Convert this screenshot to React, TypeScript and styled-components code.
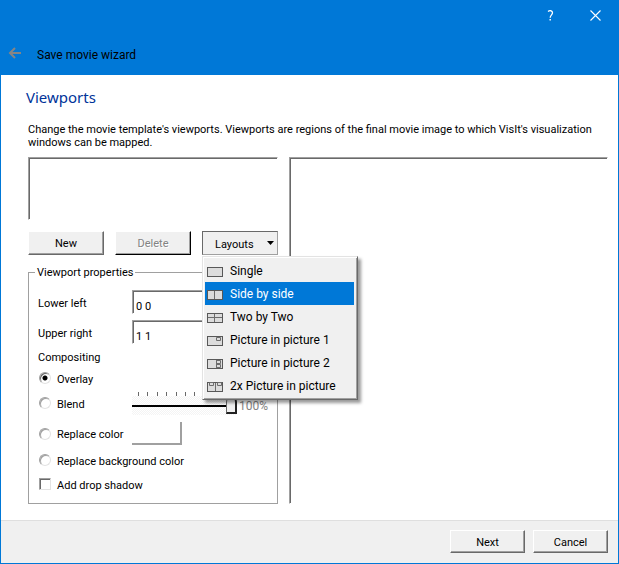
import React, { useState } from "react";
import styled, { createGlobalStyle, css } from "styled-components";

const blue = "#0078d7";
const face = "#f0f0f0";
const shade = "#a0a0a0";
const dark = "#696969";
const ui = `Roboto, "Liberation Sans", sans-serif`;

const GlobalStyle = createGlobalStyle`
  *, *::before, *::after { box-sizing: border-box; }
  body { margin: 0; background: #fff; color: #000; font: 11px/13px ${ui}; }
  button, input { font: inherit; color: inherit; margin: 0; }
`;

const Window = styled.div`
  display: flex;
  flex-direction: column;
  min-height: 100vh;
  border: 1px solid ${blue};
`;

const TitleBar = styled.header`
  background: ${blue};
`;

const CaptionButtons = styled.div`
  display: flex;
  justify-content: flex-end;
  height: 29px;
`;

const CaptionButton = styled.button`
  display: grid;
  place-items: center;
  width: 45px;
  padding: 0;
  border: 0;
  background: none;
  color: #fff;
`;

const WizardBar = styled.div`
  display: flex;
  align-items: center;
  gap: 15px;
  height: 45px;
  padding-left: 7px;
  font-size: 12px;
`;

const BackButton = styled.button`
  display: grid;
  padding: 0;
  border: 0;
  background: none;
`;

const WizardTitle = styled.span`
  padding-top: 6px;
`;

const Main = styled.main`
  flex: 1;
  display: flex;
  flex-direction: column;
  padding: 10px 10px 16px 27px;
`;

const Heading = styled.h1`
  margin: 0 0 14px -2px;
  font: 400 15px/24px "Noto Sans", sans-serif;
  color: #003399;
`;

const Intro = styled.p`
  margin: 0 0 8px;
`;

const Columns = styled.div`
  flex: 1;
  display: grid;
  grid-template-columns: 250px 1fr;
  gap: 11px;
`;

const sunken = css`
  background: #fff;
  border: 1px solid;
  border-color: ${shade} #fff #fff ${shade};
  box-shadow: inset 1px 1px 0 ${dark};
`;

const Editor = styled.section`
  display: flex;
  flex-direction: column;
`;

const ViewportList = styled.div`
  ${sunken}
  height: 63px;
`;

const Preview = styled.section`
  ${sunken}
`;

const Toolbar = styled.div`
  display: grid;
  grid-template-columns: repeat(3, 1fr);
  gap: 11px;
  margin: 11px 0;
`;

const PushButton = styled.button<{ $edge?: string }>`
  min-width: 75px;
  height: 23px;
  padding: 1px 0 0;
  background: ${face};
  border: 1px solid;
  border-color: #fff ${(p) => p.$edge ?? dark} ${(p) => p.$edge ?? dark} #fff;
  box-shadow: inset -1px -1px 0 ${shade};
  &:disabled {
    color: #838383;
    text-shadow: 1px 1px 0 #fff;
  }
`;

const ToolButton = styled(PushButton)`
  height: 24px;
`;

const Dropdown = styled.div`
  position: relative;
`;

const DropdownButton = styled.button`
  display: flex;
  align-items: center;
  justify-content: space-between;
  width: 100%;
  height: 24px;
  padding: 2px 3px 0 12px;
  background: ${face};
  border: 1px solid;
  border-color: ${dark} ${shade} ${shade} ${dark};
`;

const Caret = styled.svg`
  margin-bottom: 2px;
`;

const Menu = styled.div`
  position: absolute;
  z-index: 1;
  top: calc(100% + 1px);
  left: 0;
  width: 156px;
  padding: 2px 3px 2px 2px;
  background: ${face};
  border: 1px solid;
  border-color: #e3e3e3 ${dark} ${dark} #e3e3e3;
  box-shadow:
    inset 1px 1px 0 #fff,
    inset -1px -1px 0 ${shade},
    3px 3px 3px rgba(0, 0, 0, 0.4);
`;

const MenuItem = styled.button<{ $active: boolean }>`
  display: flex;
  align-items: center;
  gap: 7px;
  width: 100%;
  height: 23px;
  padding: 2px 0 0 2px;
  border: 0;
  text-align: left;
  font-size: 12px;
  background: ${(p) => (p.$active ? blue : "transparent")};
  color: ${(p) => (p.$active ? "#fff" : "#000")};
`;

const Group = styled.fieldset`
  flex: 1;
  min-width: 0;
  margin: 0;
  padding: 11px 9px 12px;
  border: 1px solid ${shade};
`;

const Legend = styled.legend`
  margin-left: -3px;
  padding: 0 2px;
`;

const Row = styled.div<{ $gap?: number }>`
  display: grid;
  grid-template-columns: 94px 1fr;
  align-items: center;
  margin-bottom: ${(p) => p.$gap ?? 6}px;
`;

const FieldLabel = styled.label`
  padding-top: 2px;
`;

const TextBox = styled.input`
  ${sunken}
  width: 100%;
  height: 24px;
  padding: 8px 3px 0;
`;

const Choice = styled.label`
  display: flex;
  align-items: center;
  gap: 6px;
  height: 14px;
  margin-left: 1px;
  white-space: nowrap;
`;

const ChoiceText = styled.span`
  padding-top: 2px;
`;

const Radio = styled.input.attrs({ type: "radio" })`
  appearance: none;
  flex: none;
  width: 12px;
  height: 12px;
  border: 1px solid;
  border-color: ${shade} #e3e3e3 #e3e3e3 ${shade};
  border-radius: 50%;
  background: #fff;
  box-shadow: inset 1px 1px 0 ${shade};
  &:checked {
    border-color: ${shade} #e3e3e3 #e3e3e3 ${shade};
    box-shadow: inset 1px 1px 0 ${dark};
    background: radial-gradient(circle, #000 2px, #fff 3px);
  }
`;

const CheckBox = styled.input.attrs({ type: "checkbox" })`
  appearance: none;
  flex: none;
  width: 12px;
  height: 12px;
  background: #fff;
  border: 1px solid;
  border-color: ${shade} #e3e3e3 #e3e3e3 ${shade};
  box-shadow: inset 1px 1px 0 ${dark};
  &:checked {
    background: ${dark};
  }
`;

const Stack = styled.div`
  display: grid;
  gap: 10px;
`;

const SubTitle = styled.div`
  margin: 7px 0 7px;
`;

const Opacity = styled.div`
  display: grid;
  grid-template-columns: 105px 1fr;
  align-items: end;
  column-gap: 2px;
  height: 24px;
`;

const Percent = styled.output`
  align-self: center;
  padding-top: 7px;
  font-size: 12px;
  color: #838383;
`;

const Ticks = styled.div`
  display: flex;
  justify-content: space-between;
  padding: 0 4px 0 6px;
`;

const Tick = styled.i`
  width: 1px;
  height: 4px;
  background: ${dark};
`;

const Slider = styled.input.attrs({ type: "range" })`
  appearance: none;
  display: block;
  width: 100%;
  height: 19px;
  background:
    linear-gradient(#000, #000) 0 9px / 100% 2px no-repeat,
    repeating-conic-gradient(#f4f4f4 0 25%, #fff 0 50%) 0 0 / 2px 2px;
  &::-webkit-slider-thumb {
    appearance: none;
    width: 11px;
    height: 17px;
    background: ${face};
    border: solid;
    border-width: 1px 2px 2px 1px;
    border-color: ${dark} #222 #222 ${dark};
    border-radius: 5px 5px 0 0;
  }
`;

const Swatch = styled.button`
  width: 50px;
  height: 23px;
  background: #fff;
  border: 0 solid ${shade};
  border-width: 0 2px 2px 0;
`;

const Footer = styled.footer`
  display: flex;
  justify-content: flex-end;
  gap: 8px;
  padding: 9px 10px 10px;
  background: ${face};
  border-top: 1px solid #dfdfdf;
`;

const iconLines: Record<string, string> = {
  Single: "",
  "Side by side": "M7.5 1V9",
  "Two by Two": "M7.5 1V9M1 4.5H15",
  "Picture in picture 1": "M9.5 1.5h4v3h-4z",
  "Picture in picture 2": "M9.5 1.5h4v3h-4zM9.5 5.5h4v3h-4zM9.5 1V9",
  "2x Picture in picture": "M8.500 1V9M2.5 .5h4v3h-4zM10.5 .5h4v3h-4z",
};

function LayoutIcon({ name }: { name: string }) {
  return (
    <svg width="16" height="10" viewBox="0 0 16 10" fill="none" aria-hidden="true">
      <rect x=".5" y=".5" width="15" height="9" fill="#dcdcdc" stroke="#585858" />
      <path d={iconLines[name]} stroke="#6c6c6c" />
    </svg>
  );
}

export default function App() {
  const [layout, setLayout] = useState("Side by side");
  const [mode, setMode] = useState("Overlay");
  const [opacity, setOpacity] = useState(100);

  const radio = (name: string) => (
    <Choice>
      <Radio name="compositing" checked={mode === name} onChange={() => setMode(name)} />
      <ChoiceText>{name}</ChoiceText>
    </Choice>
  );

  return (
    <Window>
      <GlobalStyle />
      <TitleBar>
        <CaptionButtons>
          <CaptionButton aria-label="Help">
            <svg width="8" height="11" viewBox="0 0 8 11" fill="none" stroke="#fff">
              <path d="M1 1.400C2.500.3 5.500.3 5.500 2.800 5.500 4.800 3.200 5 3.200 7.800" strokeWidth="1.300" />
              <path d="M3.200 9V10.500" strokeWidth="1.400" />
            </svg>
          </CaptionButton>
          <CaptionButton aria-label="Close">
            <svg width="11" height="11" viewBox="0 0 11 11" stroke="#fff" strokeWidth="1.100">
              <path d="M.5.5l10 10M10.500.5l-10 10" />
            </svg>
          </CaptionButton>
        </CaptionButtons>
        <WizardBar>
          <BackButton aria-label="Back" disabled>
            <svg width="14" height="12" viewBox="0 0 14 12" fill="none" stroke="#858585" strokeWidth="2">
              <path d="M13 6H2M7 1L2 6 7 11" />
            </svg>
          </BackButton>
          <WizardTitle>Save movie wizard</WizardTitle>
        </WizardBar>
      </TitleBar>

      <Main>
        <Heading>Viewports</Heading>
        <Intro>
          Change the movie template's viewports. Viewports are regions of the final movie image to which VisIt's
          visualization windows can be mapped.
        </Intro>
        <Columns>
          <Editor>
            <ViewportList role="listbox" aria-label="Viewports" />
            <Toolbar>
              <ToolButton>New</ToolButton>
              <ToolButton $edge="#000" disabled>
                Delete
              </ToolButton>
              <Dropdown>
                <DropdownButton aria-haspopup="menu" aria-expanded="true">
                  Layouts
                  <Caret width="7" height="4" viewBox="0 0 7 4" aria-hidden="true">
                    <path d="M0 0h7L3.500 4z" />
                  </Caret>
                </DropdownButton>
                <Menu role="menu">
                  {Object.keys(iconLines).map((name) => (
                    <MenuItem key={name} role="menuitem" $active={layout === name} onClick={() => setLayout(name)}>
                      <LayoutIcon name={name} />
                      {name}
                    </MenuItem>
                  ))}
                </Menu>
              </Dropdown>
            </Toolbar>
            <Group>
              <Legend>Viewport properties</Legend>
              <Row>
                <FieldLabel htmlFor="lower-left">Lower left</FieldLabel>
                <TextBox id="lower-left" defaultValue="0 0" />
              </Row>
              <Row>
                <FieldLabel htmlFor="upper-right">Upper right</FieldLabel>
                <TextBox id="upper-right" defaultValue="1 1" />
              </Row>
              <SubTitle>Compositing</SubTitle>
              <Row>{radio("Overlay")}</Row>
              <Row $gap={7}>
                {radio("Blend")}
                <Opacity>
                  <div>
                    <Ticks>
                      {Array.from({ length: 11 }, (_, i) => (
                        <Tick key={i} />
                      ))}
                    </Ticks>
                    <Slider
                      aria-label="Blend opacity"
                      min={0}
                      max={100}
                      value={opacity}
                      onChange={(e) => setOpacity(Number(e.target.value))}
                    />
                  </div>
                  <Percent>{opacity}%</Percent>
                </Opacity>
              </Row>
              <Row $gap={8}>
                {radio("Replace color")}
                <Swatch aria-label="Choose color" />
              </Row>
              <Stack>
                {radio("Replace background color")}
                <Choice>
                  <CheckBox />
                  <ChoiceText>Add drop shadow</ChoiceText>
                </Choice>
              </Stack>
            </Group>
          </Editor>
          <Preview aria-label="Viewport preview" />
        </Columns>
      </Main>

      <Footer>
        <PushButton>Next</PushButton>
        <PushButton>Cancel</PushButton>
      </Footer>
    </Window>
  );
}
